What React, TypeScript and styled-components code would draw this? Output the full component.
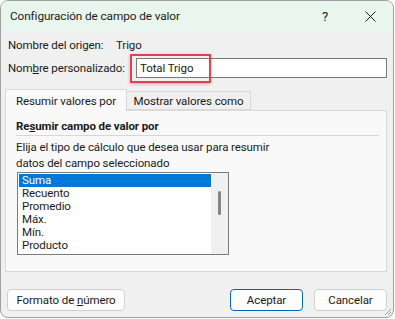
import styled, { createGlobalStyle } from 'styled-components';

const GlobalStyle = createGlobalStyle`
  html, body {
    margin: 0;
    padding: 0;
    background: #ffffff;
  }
  body {
    font-family: Roboto, "Liberation Sans", sans-serif;
    font-size: 11.5px;
    letter-spacing: -0.1px;
    color: #1a1a1a;
  }
`;

const Window = styled.div`
  width: 392px;
  height: 316px;
  border: 1px solid #a0a0a0;
  border-radius: 8px;
  background: #f0f0f0;
  overflow: hidden;
  display: flex;
  flex-direction: column;
  position: relative;
  white-space: nowrap;
`;

const TitleBar = styled.div`
  height: 30px;
  flex: none;
  display: flex;
  align-items: center;
  background: #e9f6ee;
  padding-left: 9px;
  font-size: 11.8px;
  color: #1a1a1a;
`;

const Title = styled.div`
  flex: 1;
`;

const TitleButton = styled.div<{ $w: number }>`
  width: ${(p) => p.$w}px;
  height: 30px;
  display: flex;
  align-items: center;
  justify-content: center;
  font-size: 13px;
`;

const Body = styled.div`
  flex: 1;
  display: flex;
  flex-direction: column;
  padding: 6px 6px 0 4px;
`;

const Row = styled.div<{ $h: number }>`
  height: ${(p) => p.$h}px;
  display: flex;
  align-items: center;
  padding-left: 3px;
  position: relative;
`;

const Label = styled.span<{ $w?: number }>`
  width: ${(p) => (p.$w ? `${p.$w}px` : 'auto')};
  flex: none;
`;

const TextInput = styled.div`
  flex: 1;
  height: 18px;
  border: 1px solid #7a7a7a;
  background: #ffffff;
  display: flex;
  align-items: center;
  padding-left: 3px;
`;

const Highlight = styled.div`
  position: absolute;
  left: 125px;
  top: 1px;
  width: 77px;
  height: 25px;
  border: 2px solid #e8404a;
  box-shadow: 0 1px 3px rgba(0, 0, 0, 0.25);
  pointer-events: none;
`;

const Tabs = styled.div`
  display: flex;
  align-items: flex-end;
  height: 22px;
  margin-top: 5px;
  position: relative;
  z-index: 1;
`;

const Tab = styled.div<{ $active?: boolean; $w: number }>`
  width: ${(p) => p.$w}px;
  height: ${(p) => (p.$active ? 22 : 19)}px;
  box-sizing: border-box;
  display: flex;
  align-items: center;
  justify-content: center;
  border: 1px solid #d9d9d9;
  border-bottom: ${(p) => (p.$active ? 'none' : '1px solid #d9d9d9')};
  border-left: ${(p) => (p.$active ? '1px solid #d9d9d9' : 'none')};
  background: ${(p) => (p.$active ? '#f9f9f9' : '#f0f0f0')};
  margin-bottom: ${(p) => (p.$active ? -1 : 0)}px;
`;

const Panel = styled.div`
  height: 162px;
  width: 382px;
  box-sizing: border-box;
  border: 1px solid #d9d9d9;
  background: #f9f9f9;
  padding: 6px 7px 0 10px;
`;

const SectionHead = styled.div`
  font-weight: 700;
  height: 18px;
  display: flex;
  align-items: center;
  border-bottom: 1px solid #d6d6d6;
  margin-bottom: 3px;
`;

const Description = styled.div`
  line-height: 16px;
  margin-bottom: 1px;
`;

const ListBox = styled.div`
  width: 212px;
  height: 83px;
  margin-left: 1px;
  border: 1px solid #7a7a7a;
  background: #ffffff;
  display: flex;
  box-sizing: border-box;
`;

const Items = styled.div`
  flex: 1;
  padding: 1px 0 0 1px;
`;

const Item = styled.div<{ $selected?: boolean }>`
  height: 13px;
  line-height: 13px;
  padding-left: 3px;
  background: ${(p) => (p.$selected ? '#0078d7' : 'transparent')};
  color: ${(p) => (p.$selected ? '#ffffff' : '#1a1a1a')};
`;

const ScrollTrack = styled.div`
  width: 17px;
  background: #f0f0f0;
  position: relative;
`;

const ScrollThumb = styled.div`
  position: absolute;
  left: 7px;
  top: 18px;
  width: 3px;
  height: 24px;
  border-radius: 2px;
  background: #858585;
`;

const Footer = styled.div`
  display: flex;
  align-items: center;
  margin-top: 17px;
  padding-left: 2px;
`;

const Button = styled.div<{ $primary?: boolean; $w: number }>`
  width: ${(p) => p.$w}px;
  height: 22px;
  box-sizing: border-box;
  display: flex;
  align-items: center;
  justify-content: center;
  border: 1px solid ${(p) => (p.$primary ? '#0067c0' : '#d0d0d0')};
  border-radius: 4px;
  background: #fdfdfd;
  margin-right: ${(p) => (p.$primary ? 11 : 0)}px;
`;

const Spacer = styled.div`
  flex: 1;
`;

const Grip = styled.svg`
  position: absolute;
  right: 1px;
  bottom: 1px;
`;

export default function App() {
  return (
    <>
      <GlobalStyle />
      <Window>
        <TitleBar>
          <Title>Configuración de campo de valor</Title>
          <TitleButton $w={44}>?</TitleButton>
          <TitleButton $w={46}>
            <svg width="11" height="11" viewBox="0 0 11 11">
              <path d="M0.5 0.5 L10.5 10.5 M10.5 0.5 L0.5 10.5" stroke="#1a1a1a" strokeWidth="1" />
            </svg>
          </TitleButton>
        </TitleBar>
        <Body>
          <Row $h={16}>
            <Label $w={108}>Nombre del origen:</Label>
            <span>Trigo</span>
          </Row>
          <Row $h={30}>
            <Label $w={128}>
              Nom<u>b</u>re personalizado:
            </Label>
            <TextInput>Total Trigo</TextInput>
            <Highlight />
          </Row>
          <Tabs>
            <Tab $active $w={122}>Resumir valores por</Tab>
            <Tab $w={124}>Mostrar valores como</Tab>
          </Tabs>
          <Panel>
            <SectionHead>
              <span>
                Re<u>s</u>umir campo de valor por
              </span>
            </SectionHead>
            <Description>
              Elija el tipo de cálculo que desea usar para resumir
              <br />
              datos del campo seleccionado
            </Description>
            <ListBox>
              <Items>
                <Item $selected>Suma</Item>
                <Item>Recuento</Item>
                <Item>Promedio</Item>
                <Item>Máx.</Item>
                <Item>Mín.</Item>
                <Item>Producto</Item>
              </Items>
              <ScrollTrack>
                <ScrollThumb />
              </ScrollTrack>
            </ListBox>
          </Panel>
          <Footer>
            <Button $w={118}>
              <span>
                Formato de <u>n</u>úmero
              </span>
            </Button>
            <Spacer />
            <Button $primary $w={73}>
              Aceptar
            </Button>
            <Button $w={73}>Cancelar</Button>
          </Footer>
        </Body>
        <Grip width="10" height="10" viewBox="0 0 10 10">
          <path d="M9 3 L3 9 M9 6 L6 9" stroke="#a0a0a0" strokeWidth="1" />
        </Grip>
      </Window>
    </>
  );
}
